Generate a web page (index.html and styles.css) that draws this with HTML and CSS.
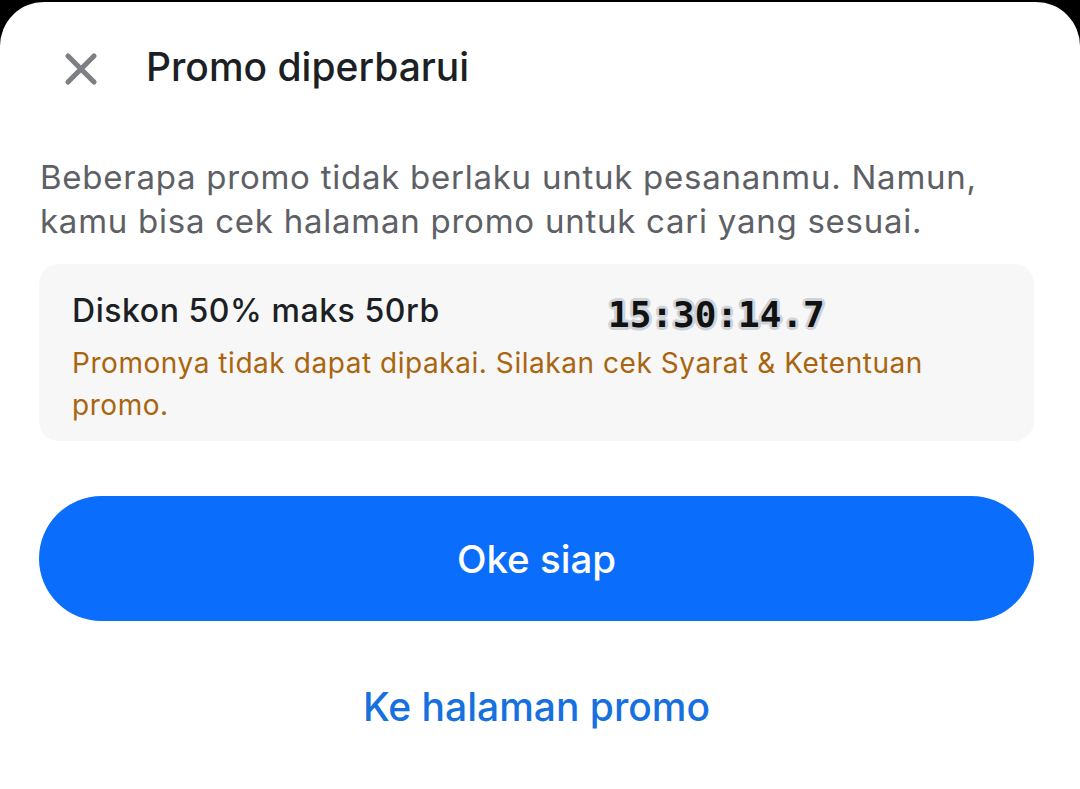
FILE: index.html
```html
<!DOCTYPE html>
<html lang="id">
<head>
<meta charset="utf-8">
<title>Promo diperbarui</title>
<link rel="stylesheet" href="styles.css">
</head>
<body>
<div class="sheet">
  <header class="header">
    <svg class="close" viewBox="0 0 34 34" width="34" height="34" aria-hidden="true">
      <path d="M4 4 L30 30 M30 4 L4 30" stroke="#7d7f84" stroke-width="5.2" stroke-linecap="round" fill="none"/>
    </svg>
    <h1 class="title">Promo diperbarui</h1>
  </header>
  <p class="desc">Beberapa promo tidak berlaku untuk pesananmu. Namun, kamu bisa cek halaman promo untuk cari yang sesuai.</p>
  <div class="card">
    <div class="card-row">
      <span class="promo-name">Diskon 50% maks 50rb</span>
      <span class="stamp">15:30:14.7</span>
    </div>
    <p class="warn">Promonya tidak dapat dipakai. Silakan cek Syarat &amp; Ketentuan promo.</p>
  </div>
  <button class="btn-primary">Oke siap</button>
  <a class="link" href="#">Ke halaman promo</a>
</div>
</body>
</html>
```
FILE: styles.css
```css
html, body {
  margin: 0;
  padding: 0;
  background: #000;
  height: 100%;
}
body {
  font-family: Inter, Roboto, sans-serif;
}
.sheet {
  margin-top: 2px;
  background: #fff;
  border-radius: 44px 44px 0 0;
  min-height: 787px;
  box-sizing: border-box;
  padding: 0 46px 0 39px;
  display: flex;
  flex-direction: column;
}
.header {
  display: flex;
  align-items: flex-start;
  height: 132px;
  padding-left: 25px;
  box-sizing: border-box;
}
.close {
  margin-top: 50px;
  flex: none;
}
.title {
  margin: 39px 0 0 48px;
  font-size: 39px;
  font-weight: 500;
  color: #1c1f24;
  line-height: 52px;
}
.desc {
  margin: 21px 0 0 1px;
  font-size: 33px;
  letter-spacing: 0.75px;
  line-height: 44px;
  color: #5d6065;
  font-weight: 400;
}
.card {
  margin-top: 21px;
  background: #f7f7f8;
  border-radius: 20px;
  padding: 24px 30px 22px 33px;
  height: 177px;
  box-sizing: border-box;
}
.card-row {
  display: flex;
  align-items: center;
  height: 44px;
}
.promo-name {
  font-size: 32px;
  letter-spacing: 0.55px;
  font-weight: 500;
  color: #1c1f24;
  width: 536px;
  flex: none;
}
.stamp {
  font-family: "DejaVu Sans Mono", "Liberation Mono", monospace;
  font-weight: bold;
  font-size: 36px;
  color: #111;
  text-shadow: 0 0 2px #cfd4da, 2px 2px 0 #cfd4da, -2px -2px 0 #cfd4da, 2px -2px 0 #cfd4da, -2px 2px 0 #cfd4da, 3px 0 0 #cfd4da, -3px 0 0 #cfd4da, 0 3px 0 #cfd4da, 0 -3px 0 #cfd4da;
  margin-top: 8px;
}
.warn {
  margin: 10px 0 0 0;
  font-size: 28px;
  letter-spacing: 0.55px;
  line-height: 42px;
  color: #a9650e;
}
.btn-primary {
  margin-top: 55px;
  height: 125px;
  border: none;
  border-radius: 63px;
  background: #0b6dfb;
  color: #fff;
  font-family: inherit;
  font-size: 38.5px;
  font-weight: 500;
  width: 100%;
  cursor: pointer;
}
.link {
  align-self: center;
  margin-top: 61px;
  font-size: 39px;
  font-weight: 500;
  color: #1670e0;
  text-decoration: none;
  line-height: 50px;
}
```
